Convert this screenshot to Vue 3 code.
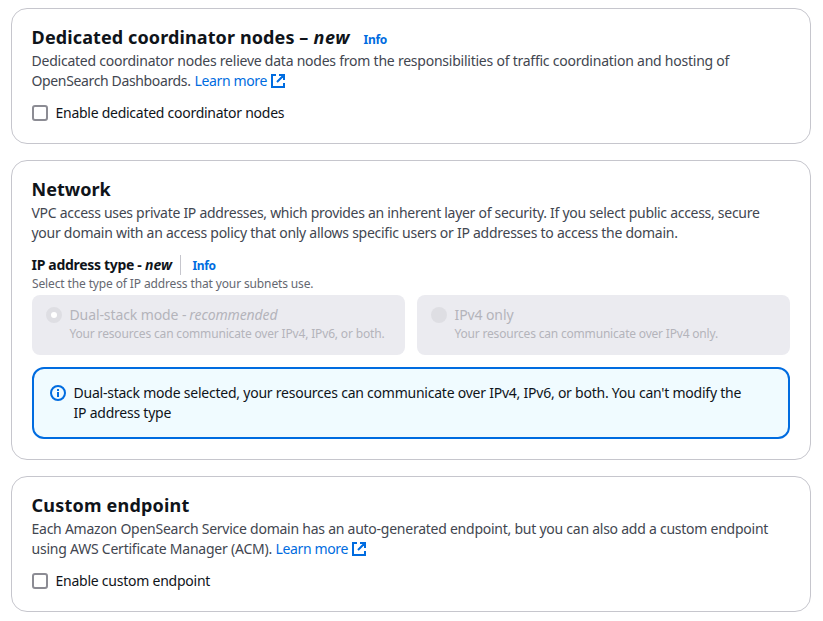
<script setup>
import { h } from 'vue'

const ExternalIcon = () =>
  h('svg', { class: 'ext', viewBox: '0 0 16 16', fill: 'none', stroke: 'currentColor', 'stroke-width': 2 }, [
    h('path', { d: 'M6 2H2v12h12v-4M9 2h5v5M14 2 7 9' }),
  ])
</script>

<template>
  <main class="page">
    <section class="card">
      <h2 class="title t1"><span class="t1-main">Dedicated coordinator nodes –</span><em>new</em><a class="info">Info</a></h2>
      <p class="desc">
        <span class="line d1">Dedicated coordinator nodes relieve data nodes from the responsibilities of traffic coordination and hosting of</span>
        <span class="line"><span class="d2">OpenSearch Dashboards.</span><a class="link">Learn more</a><ExternalIcon /></span>
      </p>
      <label class="check"><span class="box"></span><span class="c1">Enable dedicated coordinator nodes</span></label>
    </section>

    <section class="card">
      <h2 class="title">Network</h2>
      <p class="desc">
        <span class="line d3">VPC access uses private IP addresses, which provides an inherent layer of security. If you select public access, secure</span>
        <span class="line d4">your domain with an access policy that only allows specific users or IP addresses to access the domain.</span>
      </p>
      <div class="field-label"><span class="f1">IP address type -</span><em>new</em><i class="divider"></i><a class="info">Info</a></div>
      <p class="hint">Select the type of IP address that your subnets use.</p>
      <div class="tiles">
        <div class="tile">
          <span class="radio on"></span>
          <div>
            <div class="tile-title"><span>Dual-stack mode -</span><em>recommended</em></div>
            <div class="tile-desc">Your resources can communicate over IPv4, IPv6, or both.</div>
          </div>
        </div>
        <div class="tile">
          <span class="radio"></span>
          <div>
            <div class="tile-title"><span>IPv4 only</span></div>
            <div class="tile-desc narrow">Your resources can communicate over IPv4 only.</div>
          </div>
        </div>
      </div>
      <div class="alert">
        <svg class="alert-icon" viewBox="0 0 16 16" fill="none" stroke="currentColor" stroke-width="2">
          <circle cx="8" cy="8" r="7" />
          <path d="M8 7v5M8 4v2" />
        </svg>
        <div>
          <span class="line">Dual-stack mode selected, your resources can communicate over IPv4, IPv6, or both. You can't modify the</span>
          <span class="line">IP address type</span>
        </div>
      </div>
    </section>

    <section class="card">
      <h2 class="title t3">Custom endpoint</h2>
      <p class="desc">
        <span class="line d5">Each Amazon OpenSearch Service domain has an auto-generated endpoint, but you can also add a custom endpoint</span>
        <span class="line"><span class="d6">using AWS Certificate Manager (ACM).</span><a class="link">Learn more</a><ExternalIcon /></span>
      </p>
      <label class="check"><span class="box"></span><span class="c2">Enable custom endpoint</span></label>
    </section>
  </main>
</template>

<style>
body { background: #fff; }
.ext { width: 16px; height: 16px; margin-left: 2.5px; flex: none; color: #006ce0; }
</style>

<style scoped>
.page {
  display: flex;
  flex-direction: column;
  gap: 16px;
  box-sizing: border-box;
  width: 823px;
  height: 621px;
  padding: 8px 12px 0 11px;
  font: 14px/20px "Noto Sans", sans-serif;
  color: #0f141a;
}
.card {
  box-sizing: border-box;
  border: 1px solid #c6c6cd;
  border-radius: 16px;
  padding: 17px 20px 20px;
}
.title {
  display: flex;
  margin: 0 0 3px -0.4px;
  height: 22px;
  font-size: 18px;
  line-height: 22px;
  font-weight: 700;
}
.t1-main { letter-spacing: 0.11px; width: 282px; }
.t1 em { width: 50px; letter-spacing: 0.6px; }
.t3 { letter-spacing: 0.2px; }
.info {
  font-size: 12px;
  font-weight: 700;
  color: #006ce0;
  letter-spacing: -0.35px;
}
.t1 .info { line-height: 28px; }
.desc { margin: 0 0 12px -0.5px; color: #424650; }
.line { display: flex; align-items: center; white-space: nowrap; height: 20px; }
.link { color: #006ce0; letter-spacing: -0.36px; }
.d1 { letter-spacing: -0.235px; }
.d2 { letter-spacing: -0.36px; width: 163px; }
.d3 { letter-spacing: -0.286px; }
.d4 { letter-spacing: -0.265px; }
.d5 { letter-spacing: -0.248px; }
.d6 { letter-spacing: -0.23px; width: 244px; }
.check { display: flex; align-items: center; gap: 7.5px; height: 20px; }
.box {
  box-sizing: border-box;
  width: 16px;
  height: 16px;
  border: 2px solid #8c8c94;
  border-radius: 3px;
}
.c1 { letter-spacing: -0.265px; }
.c2 { letter-spacing: -0.24px; }
.field-label { display: flex; height: 20px; margin-left: -0.5px; font-weight: 700; }
.f1 { letter-spacing: -0.31px; width: 113.5px; }
.field-label em { width: 35px; }
.field-label .info { line-height: 22px; }
.divider { width: 1px; height: 20px; background: #c6c6cd; margin-right: 11.5px; }
.hint {
  margin: 0 0 3px;
  padding-top: 1px;
  font-size: 12px;
  line-height: 16px;
  letter-spacing: -0.13px;
  color: #656871;
}
.tiles { display: grid; grid-template-columns: 1fr 1fr; gap: 12px; }
.tile {
  display: flex;
  gap: 7.5px;
  box-sizing: border-box;
  height: 60px;
  padding: 10px 14px;
  border-radius: 8px;
  background: #ebebf0;
  color: #b4b4bb;
}
.radio {
  box-sizing: border-box;
  width: 16px;
  height: 16px;
  margin-top: 2px;
  border-radius: 50%;
  background: #dedee3;
}
.radio.on { background: #fff; border: 5px solid #dedee3; }
.tile-title { display: flex; gap: 3px; letter-spacing: -0.1px; }
.tile-desc { font-size: 12px; line-height: 18px; letter-spacing: -0.166px; white-space: nowrap; }
.narrow { letter-spacing: -0.187px; }
.alert {
  display: flex;
  gap: 7.5px;
  box-sizing: border-box;
  height: 72px;
  margin-top: 12px;
  padding: 14px 16px;
  border: 2px solid #006ce0;
  border-radius: 12px;
  background: #f0fbff;
  letter-spacing: -0.232px;
}
.alert-icon { width: 16px; height: 16px; margin-top: 2px; color: #006ce0; }
</style>
